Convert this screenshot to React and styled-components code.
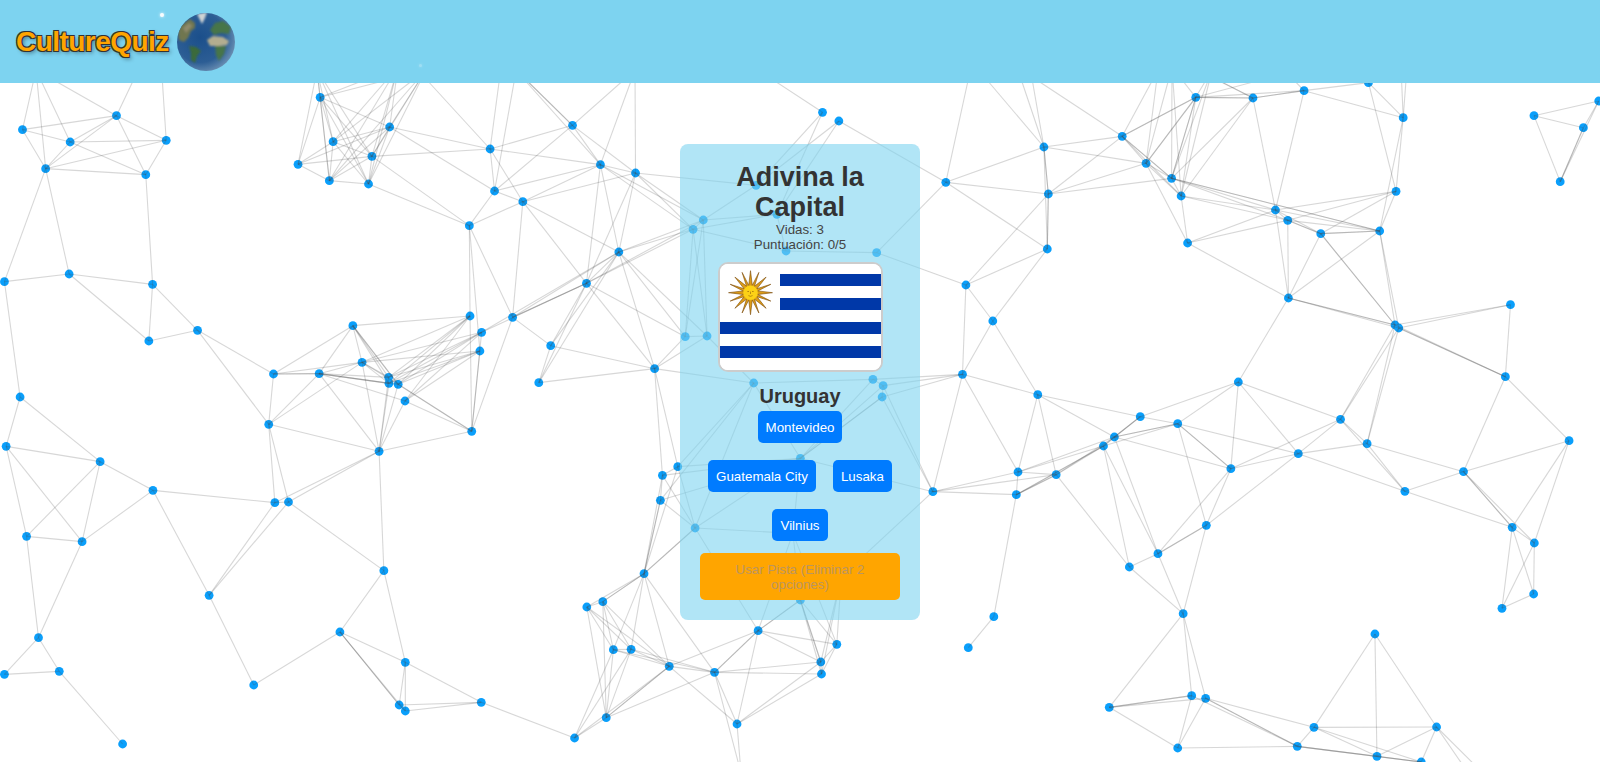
import React from 'react'
import styled, { createGlobalStyle } from 'styled-components'

const GlobalStyle = createGlobalStyle`
  html, body { margin: 0; padding: 0; height: 100%; overflow: hidden; background: #fff; }
  body { font-family: "Liberation Sans", Arial, sans-serif; color: #333; }
`

// node positions were read off 534x342 crops, so they go through this scale
const crop = (ox, oy, prefix, pts) =>
  Object.fromEntries(pts.map(([x, y], i) => [`${prefix}${i + 1}`, [ox + x / 2.936, oy + y / 3]]))

const nodes = {
  ...crop(0, 80, 'a', [[66,149],[206,186],[342,107],[488,181],[134,266],[428,284],[13,605],[203,582],[448,613],[580,751],[437,783],[803,882],[937,881],[1036,737],[1063,847],[1141,892],[1142,910],[1169,913],[1189,963],[1380,708],[1505,712],[1414,757],[1409,813],[1378,437],[1535,365],[1452,333],[1439,207],[1144,141],[940,52],[978,185],[1092,229],[875,253],[967,302],[1082,312],[59,951]]),
  ...crop(0, 420, 'b', [[18,79],[294,125],[449,211],[78,349],[241,365],[113,653],[13,763],[174,754],[360,972],[789,13],[1113,94],[1385,34],[807,248],[847,246],[614,526],[745,795],[1127,452],[998,636],[1190,727],[1172,855],[1190,873],[1413,847]]),
  ...crop(533, 80, 'c', [[116,136],[198,254],[301,279],[252,516],[157,610],[52,797],[17,908],[357,866],[850,97],[898,123],[655,316],[716,403],[500,420],[470,448],[743,513],[1009,518],[447,770],[511,768],[648,909],[998,898],[1028,917],[1025,951],[1212,307],[1500,201],[1513,342],[1510,507],[1271,615],[1350,723],[1261,883],[1482,944]]),
  ...crop(533, 420, 'd', [[380,166],[425,140],[374,241],[476,324],[326,461],[205,545],[158,561],[236,689],[288,688],[400,739],[533,757],[661,632],[785,540],[785,115],[892,673],[845,726],[847,762],[599,912],[215,893],[122,954],[1174,215],[1424,156],[1536,164],[1419,224],[1353,590],[1278,683],[763,340],[905,470]]),
  ...crop(1066, 80, 'e', [[381,52],[549,54],[699,32],[888,8],[990,113],[165,169],[235,250],[310,295],[338,348],[357,489],[615,390],[651,421],[748,461],[921,453],[969,334],[653,654],[966,735],[977,744],[1305,674],[1290,890],[506,906],[806,1018],[218,1010],[1374,107],[1519,143],[1564,63],[1451,305]]),
  ...crop(1066, 420, 'f', [[142,51],[110,78],[328,11],[484,146],[682,101],[884,71],[995,214],[1167,155],[1477,62],[1310,322],[1375,369],[1373,522],[1280,565],[412,316],[270,401],[186,441],[344,581],[907,642],[127,862],[369,827],[410,835],[328,984],[728,922],[1088,921],[679,979],[913,1009],[1043,1026]]),
}

// points that sit under the header or below the fold, only lines reach them
const offstage = {
  h1: [36, 70], h3: [143, 60], h4: [161, 60], h5: [415, 67], h6: [398, 67], h7: [426, 70], h8: [317, 70],
  h9: [513, 67], h10: [635, 70], h11: [758, 70], h12: [971, 67], h13: [976, 67], h14: [1017, 67], h15: [1030, 67],
  h17: [741, 773], h19: [1158, 70], h20: [1172, 67], h21: [1212, 70], h22: [1192, 67], h23: [1287, 73],
  h24: [1401, 67], h25: [1407, 67], h26: [1480, 790], h27: [1500, 790], h28: [502, 60], h29: [518, 60],
}

const hiddenDots = ['d27', 'd28']

const edges = `
a1-a3 a1-a2 a1-a5 a1-h1 a5-h1 a2-h1 a3-h1 a3-h3 a4-h4 a2-a3 a2-a4 a2-a5 a2-a6 a3-a5 a3-a6 a3-a4 a4-a5 a4-a6 a5-a6
a5-a7 a5-a8 a6-a9 a7-a8 a8-a9 a8-a11 a9-a10 a9-a11 a10-a11 a7-a35 a10-a12 a10-b10 a12-a13 a12-a13 a12-a14 a12-a15 a12-b10
a13-a15 a13-a14 a14-a20 a14-a16 a14-a18 a14-a18 a14-a17 a14-a15 a13-a16 a13-a17 a13-a17 a13-a18 a13-a19 a15-a16 a15-a17 a15-a18
a16-a20 a17-a20 a18-a20 a16-a22 a17-a22 a18-a22 a16-a23 a17-a23 a18-a23 a15-a20 a15-a22 a15-a23 a19-a20 a19-a22 a19-a23
b10-a13 b10-a15 a13-b11 a15-b11 a16-b11 a17-b11 a18-b11 a19-b11 b10-b11 b11-b12 a19-b12 a18-b12 a18-b12 a23-b12 a20-b12 a22-b12 a21-b12
a24-a20 a24-a23 a24-a21 a25-a21 a24-a25 a24-a26 a24-a34 a24-a31 a26-a27 a28-a27 a28-a26 a31-a27 a27-h5 a27-c1 a27-c2 a27-a25 a26-a25 a26-c1 a26-c2
a27-h28 a26-h29 a28-a29 a28-a30 a28-a31 a28-a32 a28-a33 a28-a34 a29-a30 a29-a31 a29-a32 a29-a33 a29-a34 a30-a32 a30-a33 a30-a31 a30-a34 a31-a32 a31-a33 a31-a34 a32-a33 a33-a34
a28-h6 a31-h6 a34-h6 a30-h6 a29-h6 a33-h6 a28-h7 a31-h7 a34-h7 a33-h7 a30-h7 a29-h7 a29-h8 a32-h8 a30-h8 a31-h8 a33-h8 a34-h8
a35-b1 a35-b2 b1-b2 b1-b4 b1-b5 b2-b3 b2-b4 b2-b5 b3-b5 b4-b5 b3-b13 b3-b15 b4-b6 b5-b6 b6-b7 b6-b8 b7-b8 b8-b9 b13-b14 b10-b13 b10-b14
b13-b11 b14-b11 b13-b15 b14-b15 b14-b17 b11-b17 b15-b16 b16-b18 b17-b18 b17-b19 b18-b19 b18-b20 b18-b20 b18-b21 b19-b20 b19-b21 b19-b22 b20-b22 b21-b22 b20-b21 b22-d20
c1-h9 c1-h9 c2-h9 c1-h10 c2-h10 c3-h10 c1-c2 c1-c3 c2-c3 c2-c4 c3-c4 c3-c5 c2-c5 a25-c2 a25-c3 a25-c5 a25-c4 c3-c11 c3-c13 c3-c14 c2-c13 c2-c14 c4-c13 c4-c14 c5-c13 c5-c14
c5-c4 a21-c5 a21-c5 a21-c4 a22-c5 a22-c4 a21-c6 c4-c8 c4-c17 c5-c8 c5-c17 c4-c18 c6-c4 c6-c5 c7-c4 c7-c5 c6-c8 c7-c8 c6-c7 c8-c17 c8-c18 c8-c19 c8-d1 c8-d2 c17-c18 c18-c19
c13-c14 c13-c17 c13-c18 c14-c17 c14-c18 c13-c12 c13-c11 c14-c12 c14-c15 c11-c9 c11-c10 c12-c9 c12-c10 c15-c12 c15-c16 c16-c23 c16-c27 c10-c23 c9-h11
c23-c24 c23-c25 c23-c26 c23-h12 c24-h13 c24-h14 c24-h15 c24-c25 c24-c25 c24-c26 c25-c26 c25-c26 c25-c27 c26-c27 c26-c28 c27-c28 c27-c29 c28-c29 c28-c30 c29-c20 c29-c21 c29-c22 c29-c30
c19-c20 c20-c21 c21-c22 c20-d14 c21-d14 c22-d14 c22-d14 c19-d3 c19-d4 c19-d14 c22-d21 c21-d21 c29-d21 c29-d22 c30-d22 c30-d23
d1-d2 d1-d3 d3-d5 d3-d5 d1-d5 d2-d5 d1-d14 d2-d14 d3-d14 d2-c19 d4-d1 d4-d2 d4-d3 d4-d5 d4-d5 d4-d14 d4-d27 d27-d14 d27-d13 d12-d4 d12-d27 d12-d13 d12-d13 d13-d16 d13-d16 d13-d17 d13-d15 d27-d15 d15-d28 d16-d28 d17-d28 d21-d28
d5-d6 d5-d6 d5-d7 d5-d8 d5-d9 d5-d10 d5-d11 d6-d7 d6-d8 d6-d9 d6-d10 d7-d8 d7-d9 d7-d10 d7-d19 d6-d19 d8-d9 d8-d19 d8-d20 d9-d19 d9-d20 d8-d10 d9-d10 d8-d11 d9-d11 d10-d11 d10-d12 d10-d19 d10-d19 d10-d20 d10-d18
d11-d12 d11-d12 d11-d16 d11-d17 d11-d18 d11-d19 d12-d15 d12-d16 d12-d18 d15-d16 d15-d17 d16-d17 d16-d18 d17-d18 d19-d20 d11-h17 d18-h17 d21-d14
d21-d22 d21-d23 d21-d24 d22-d23 d22-d24 d23-d24 d23-d24 d24-d25 d25-d26 d23-f2 d24-f2 d24-f2 d22-f1 d23-f1 d22-f2 d23-f16 c30-f1
e6-h14 e6-c24 e7-c24 e7-c25 e6-c25 e8-c25 e6-e7 e6-e8 e6-e8 e6-e9 e7-e8 e7-e9 e7-e10 e8-e9 e9-e10 e8-e1 e8-e1 e7-e1 e7-e1 e6-e1 e6-e1 e9-e1 e8-e2 e9-e2 e1-e2 e1-e2 e2-e3 e2-e3 e1-e3 e3-e4
e2-e11 e3-e11 e4-e5 e3-e5 e4-e15 e5-e15 e5-e14 e15-e14 e15-e11 e15-e12 e15-e13 e8-e11 e8-e12 e8-e14 e8-e14 e9-e11 e9-e12 e10-e11 e10-e12 e10-e16 e11-e12 e11-e13 e12-e13 e12-e13 e12-e14 e13-e14 e13-e14 e11-e14 e11-e16 e12-e16 e13-e16 e14-e16
e13-e17 e13-e17 e14-e17 e14-e18 e16-e17 e16-e18 e16-e17 e17-e19 e18-e19 e17-e20 e18-e20 e18-e20 e19-e20 e16-e21 e21-e22 e21-e23 e21-f3 e21-f4 e21-f5 e20-f8 e20-f9 e17-e22 e18-e22 e17-f6 e18-f6
e24-e26 e24-e25 e24-e27 e25-e26 e25-e27 e25-e27 e26-e27 e6-h19 e7-h19 e7-h20 e8-h20 e9-h21 e8-h21 e1-h21 e1-h20 e9-h20 e2-h22 e2-h22 e3-h23 e1-h23 e5-h24 e5-h25 e4-h24 e23-c30
f1-f2 f1-f3 f1-f3 f2-f3 f1-f4 f1-f15 f2-f15 f2-f16 f3-f4 f3-f4 f3-f14 f3-f5 e23-f3 e23-f1 e23-f1 e23-f2 f4-f5 e22-f4 f4-f14 f4-f15 f5-e22 f5-f6 f5-f7 f5-f14 e22-f6 e22-f7 f6-f7 f6-f8 f7-f8 f7-f10 f8-f9 f8-f10 f8-f11 f8-f10
f9-f10 f9-f11 f10-f11 f10-f12 f10-f13 f11-f12 f11-f13 f12-f13 f14-f15 f14-f15 f15-f16 f14-f17 f15-f17 f16-f17 f17-f19 f17-f20 f17-f21 f19-f20 f19-f20 f19-f21 f19-f22 f20-f22 f21-f22 f21-f23 f21-f25 f21-f25 f20-f25 f22-f25 f23-f25
f23-f24 f23-f26 f23-f27 f18-f23 f18-f24 f18-f26 f24-f26 f24-f27 f25-f26 f25-f26 f25-f27 f26-f27 f26-f27 f24-h26 f24-h27
`.trim().split(/\s+/)

const Page = styled.div`
  position: relative;
  height: 100vh;
  overflow: hidden;
`

const NetworkSvg = styled.svg`
  position: absolute;
  top: 0;
  left: 0;
  z-index: 0;
`

const Header = styled.header`
  position: relative;
  z-index: 2;
  display: flex;
  align-items: center;
  gap: 8px;
  height: 83px;
  padding: 0 16px;
  box-sizing: border-box;
  background: #7dd3f0;
`

const Logo = styled.div`
  font-size: 28px;
  font-weight: 700;
  letter-spacing: -0.55px;
  color: #ffa500;
  text-shadow: -1px -1px 0 #333, 1px -1px 0 #333, -1px 1px 0 #333, 1px 1px 0 #333, 2px 2px 4px rgba(0, 0, 0, 0.45);
`

const Star = styled.span`
  position: absolute;
  left: ${p => p.$x}px;
  top: ${p => p.$y}px;
  width: ${p => p.$size}px;
  height: ${p => p.$size}px;
  border-radius: 50%;
  background: #fff;
  opacity: ${p => p.$alpha};
  box-shadow: 0 0 3px #fff;
`

const Main = styled.main`
  position: relative;
  z-index: 1;
  display: flex;
  justify-content: center;
  padding-top: 61px;
`

const Card = styled.section`
  width: 240px;
  box-sizing: border-box;
  padding: 18px 20px 20px;
  border-radius: 8px;
  background: rgba(125, 211, 240, 0.6);
  text-align: center;
`

const Title = styled.h1`
  margin: 0;
  font-size: 27px;
  line-height: 30px;
  font-weight: 700;
  color: #333;
`

const Stat = styled.p`
  margin: 0;
  font-size: 13.3px;
  line-height: 15px;
  color: #444;
`

const FlagFrame = styled.div`
  width: 165px;
  height: 110px;
  margin: 10px auto 13px;
  box-sizing: border-box;
  border: 2px solid #ccc;
  border-radius: 10px;
  overflow: hidden;
  background: #fff;

  svg { display: block; width: 100%; height: 100%; }
`

const Country = styled.h2`
  margin: 0 0 3px;
  font-size: 20px;
  line-height: 23px;
  font-weight: 700;
  color: #333;
`

const Options = styled.div`
  display: flex;
  flex-wrap: wrap;
  justify-content: center;
  gap: 17px;
`

const OptionButton = styled.button`
  height: 32px;
  padding: 0 8px;
  border: none;
  border-radius: 5px;
  background: #007bff;
  color: #fff;
  font-family: inherit;
  font-size: 13.33px;
  cursor: pointer;
`

const HintButton = styled.button`
  display: block;
  width: 200px;
  height: 47px;
  margin-top: 12px;
  padding: 8px;
  border: none;
  border-radius: 5px;
  background: #ffa500;
  color: #bb9560;
  font-family: inherit;
  font-size: 13.33px;
  line-height: 15px;
`

function Network() {
  const all = { ...nodes, ...offstage }
  return (
    <NetworkSvg width="1600" height="762" viewBox="0 0 1600 762">
      {Object.entries(nodes)
        .filter(([id]) => !hiddenDots.includes(id))
        .map(([id, [x, y]]) => (
          <circle key={id} cx={x} cy={y} r="4.4" fill="#0a9ffb" />
        ))}
      {edges.map((edge, i) => {
        const [from, to] = edge.split('-')
        if (!all[from] || !all[to]) return null
        return (
          <line
            key={i}
            x1={all[from][0]}
            y1={all[from][1]}
            x2={all[to][0]}
            y2={all[to][1]}
            stroke="#4a4a4a"
            strokeOpacity="0.22"
            strokeWidth="1.1"
          />
        )
      })}
    </NetworkSvg>
  )
}

function Globe() {
  return (
    <svg width="58" height="58" viewBox="0 0 58 58">
      <defs>
        <radialGradient id="sea" cx="40%" cy="42%" r="72%">
          <stop offset="0%" stopColor="#1b4f8b" />
          <stop offset="60%" stopColor="#2c5d94" />
          <stop offset="100%" stopColor="#86a5c0" />
        </radialGradient>
        <filter id="soft"><feGaussianBlur stdDeviation="0.8" /></filter>
        <clipPath id="disc"><circle cx="29" cy="29" r="29" /></clipPath>
      </defs>
      <circle cx="29" cy="29" r="29" fill="url(#sea)" />
      <g clipPath="url(#disc)">
        <g filter="url(#soft)">
          <path d="M20 1 L30 -1 L28 5 L25 11 L23 7 Z" fill="#cfd3d4" />
          <path d="M3 13 L13 6 L18 10 L18 15 L14 18 L11 25 L7 29 L2 27 L1 19 Z" fill="#6f7650" />
          <path d="M6 15 L12 10 L15 13 L9 20 Z" fill="#8f8a6c" />
          <path d="M12 33 L19 34 L24 38 L20 43 L18 50 L14 47 L14 40 Z" fill="#3b6a3b" />
          <path d="M38 10 L46 8 L54 14 L52 21 L44 20 L37 22 L33 17 Z" fill="#47754a" />
          <path d="M30 27 L36 23 L46 24 L52 28 L50 32 L42 33 L33 33 Z" fill="#b3ad90" />
          <path d="M38 33 L49 33 L47 41 L42 48 L39 42 Z" fill="#47754a" />
        </g>
      </g>
    </svg>
  )
}

// eight straight rays and eight wavy ones, the wavy ones are just thinner here
const sunRays = Array.from({ length: 16 }, (_, i) => {
  const a = (i * Math.PI) / 8
  const spread = i % 2 ? 0.22 : 0.34
  const pt = (r, t) => `${(30.5 + r * Math.cos(t)).toFixed(1)},${(28.7 + r * Math.sin(t)).toFixed(1)}`
  return `${pt(6, a - spread)} ${pt(22, a)} ${pt(6, a + spread)}`
})

function UruguayFlag() {
  return (
    <svg viewBox="0 0 161 106" preserveAspectRatio="none">
      <rect width="161" height="106" fill="#fff" />
      <rect x="60" y="10" width="101" height="12" fill="#0038a8" />
      <rect x="60" y="34" width="101" height="12" fill="#0038a8" />
      <rect y="58" width="161" height="12" fill="#0038a8" />
      <rect y="82" width="161" height="12" fill="#0038a8" />
      {sunRays.map((pts, i) => (
        <polygon key={i} points={pts} fill="#dc9c18" stroke="#7b4a08" strokeWidth="0.6" />
      ))}
      <circle cx="30.5" cy="28.7" r="7.5" fill="#fcd116" stroke="#c9971a" strokeWidth="0.4" />
      <circle cx="28.1" cy="27.5" r="0.6" fill="#7b4a08" />
      <circle cx="32.9" cy="27.5" r="0.6" fill="#7b4a08" />
      <path d="M30.5 27.6 V30 M28.4 31.6 Q30.5 33 32.6 31.6" stroke="#7b4a08" strokeWidth="0.5" fill="none" />
    </svg>
  )
}

export default function App() {
  return (
    <Page>
      <GlobalStyle />
      <Network />
      <Header>
        <Logo>CultureQuiz</Logo>
        <Globe />
        <Star $x={160} $y={13} $size={4} $alpha={0.95} />
        <Star $x={419} $y={64} $size={3} $alpha={0.25} />
      </Header>
      <Main>
        <Card>
          <Title>Adivina la Capital</Title>
          <Stat>Vidas: 3</Stat>
          <Stat>Puntuación: 0/5</Stat>
          <FlagFrame><UruguayFlag /></FlagFrame>
          <Country>Uruguay</Country>
          <Options>
            <OptionButton>Montevideo</OptionButton>
            <OptionButton>Guatemala City</OptionButton>
            <OptionButton>Lusaka</OptionButton>
            <OptionButton>Vilnius</OptionButton>
          </Options>
          <HintButton disabled>Usar Pista (Eliminar 2 opciones)</HintButton>
        </Card>
      </Main>
    </Page>
  )
}
